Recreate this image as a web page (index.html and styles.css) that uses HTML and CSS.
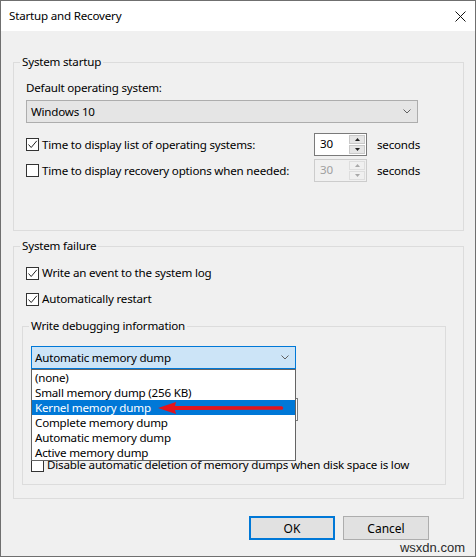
FILE: index.html
```html
<!DOCTYPE html>
<html>
<head>
<meta charset="utf-8">
<title>Startup and Recovery</title>
<link rel="stylesheet" href="styles.css">
</head>
<body>
<div class="window">
  <div class="titlebar">
    <span class="title">Startup and Recovery</span>
    <svg class="close" width="11" height="11" viewBox="0 0 11 11"><path d="M0.5 0.5 L10.5 10.5 M10.5 0.5 L0.5 10.5" stroke="#111" stroke-width="1" fill="none"/></svg>
  </div>
  <div class="content">
    <fieldset class="group startup">
      <legend>System startup</legend>
      <div class="label">Default operating system:</div>
      <div class="select os">
        <span>Windows 10</span>
        <svg class="chev" width="8" height="5" viewBox="0 0 8 5"><path d="M0.5 0.5 L4 4 L7.5 0.5" stroke="#606060" stroke-width="1" fill="none"/></svg>
      </div>
      <div class="row timed">
        <span class="check"><svg width="11" height="11" viewBox="0 0 11 11"><path d="M1.5 5.5 L4.2 8.5 L9.8 1.8" stroke="#222" stroke-width="1" fill="none"/></svg></span>
        <span class="row-text">Time to display list of operating systems:</span>
        <div class="spin">
          <span class="spin-value">30</span>
          <span class="spin-btns">
            <span class="spin-btn"><svg width="5" height="3" viewBox="0 0 5 3"><path d="M0 3 L2.5 0 L5 3 Z" fill="#222"/></svg></span>
            <span class="spin-btn"><svg width="5" height="3" viewBox="0 0 5 3"><path d="M0 0 L2.5 3 L5 0 Z" fill="#222"/></svg></span>
          </span>
        </div>
        <span class="unit">seconds</span>
      </div>
      <div class="row timed second">
        <span class="check"></span>
        <span class="row-text">Time to display recovery options when needed:</span>
        <div class="spin disabled">
          <span class="spin-value">30</span>
          <span class="spin-btns">
            <span class="spin-btn"><svg width="5" height="3" viewBox="0 0 5 3"><path d="M0 3 L2.5 0 L5 3 Z" fill="#a8a8a8"/></svg></span>
            <span class="spin-btn"><svg width="5" height="3" viewBox="0 0 5 3"><path d="M0 0 L2.5 3 L5 0 Z" fill="#a8a8a8"/></svg></span>
          </span>
        </div>
        <span class="unit">seconds</span>
      </div>
    </fieldset>

    <fieldset class="group failure">
      <legend>System failure</legend>
      <div class="row">
        <span class="check"><svg width="11" height="11" viewBox="0 0 11 11"><path d="M1.5 5.5 L4.2 8.5 L9.8 1.8" stroke="#222" stroke-width="1" fill="none"/></svg></span>
        <span class="row-text">Write an event to the system log</span>
      </div>
      <div class="row gap">
        <span class="check"><svg width="11" height="11" viewBox="0 0 11 11"><path d="M1.5 5.5 L4.2 8.5 L9.8 1.8" stroke="#222" stroke-width="1" fill="none"/></svg></span>
        <span class="row-text">Automatically restart</span>
      </div>

      <fieldset class="group debug">
        <legend>Write debugging information</legend>
        <div class="dropdown">
          <div class="select open">
            <span>Automatic memory dump</span>
            <svg class="chev" width="8" height="5" viewBox="0 0 8 5"><path d="M0.5 0.5 L4 4 L7.5 0.5" stroke="#606060" stroke-width="1" fill="none"/></svg>
          </div>
          <ul class="list">
            <li>(none)</li>
            <li>Small memory dump (256 KB)</li>
            <li class="selected">Kernel memory dump</li>
            <li>Complete memory dump</li>
            <li>Automatic memory dump</li>
            <li>Active memory dump</li>
            <svg class="arrow" width="130" height="14" viewBox="0 0 130 14"><path d="M0 7 L18 1 L17 5 L124 5.2 Q126.5 7 124 8.8 L17 9 L18 13 Z" fill="#e3141c"/></svg>
          </ul>
        </div>
        <div class="textbox"></div>
        <div class="row disable">
          <span class="check"></span>
          <span class="row-text">Disable automatic deletion of memory dumps when disk space is low</span>
        </div>
      </fieldset>
    </fieldset>

    <div class="buttons">
      <button class="btn default">OK</button>
      <button class="btn">Cancel</button>
    </div>
  </div>
  <div class="watermark">wsxdn.com</div>
</div>
</body>
</html>
```

FILE: styles.css
```css
* { box-sizing: border-box; }
html, body { margin: 0; padding: 0; }
body {
  width: 476px;
  height: 557px;
  overflow: hidden;
  font-family: "Noto Sans", "Liberation Sans", sans-serif;
  font-size: 11.6px;
  letter-spacing: -0.2px;
  color: #000;
  background: #f0f0f0;
}
.window {
  position: relative;
  width: 476px;
  height: 557px;
  border: 1px solid #6f6f6f;
  background: #f0f0f0;
}
.titlebar {
  height: 30px;
  background: #fff;
  display: flex;
  align-items: center;
  justify-content: space-between;
  padding: 0 9px 0 8px;
}
.title { line-height: 16px; }
.close { margin-top: 1px; }
.content { padding: 0 0 0 12px; }

.group {
  margin: 0;
  border: 1px solid #dcdcdc;
  padding: 0 0 0 12px;
  min-width: 0;
}
.group legend {
  padding: 0 2px;
  margin-left: -6px;
  line-height: 16px;
  height: 16px;
}
.startup {
  width: 451px;
  margin-top: 23px;
  padding-top: 10px;
  padding-bottom: 48px;
}
.label { line-height: 16px; height: 16px; }
.select {
  height: 23px;
  border: 1px solid #adadad;
  background: #e5e5e5;
  display: flex;
  align-items: center;
  justify-content: space-between;
  padding: 0 6px 0 4px;
  line-height: 16px;
}
.select.os { width: 392px; margin-top: 4px; }
.row {
  display: flex;
  align-items: center;
  height: 16px;
  line-height: 16px;
}
.check {
  width: 13px;
  height: 13px;
  border: 1px solid #333;
  background: #fff;
  margin-right: 3px;
  display: flex;
  align-items: center;
  justify-content: center;
  flex: none;
}
.timed { height: 23px; margin-top: 10px; }
.timed.second { margin-top: 3px; }
.timed .row-text { width: 272px; }
.spin {
  width: 53px;
  height: 23px;
  border: 1px solid #7a7a7a;
  background: #fff;
  display: flex;
  align-items: stretch;
}
.spin-value { flex: 1; padding-left: 5px; line-height: 20px; }
.spin-btns {
  width: 17px;
  display: flex;
  flex-direction: column;
  padding: 1px 1px 1px 0;
  gap: 1px;
}
.spin-btn {
  flex: 1;
  background: #e5e5e5;
  border: 1px solid #c9c9c9;
  display: flex;
  align-items: center;
  justify-content: center;
}
.spin.disabled { border-color: #cccccc; background: #f0f0f0; color: #a0a0a0; }
.spin.disabled .spin-btn { background: #f0f0f0; border-color: #dedede; }
.unit { margin-left: 10px; }

.failure {
  width: 451px;
  margin-top: 7px;
  padding-top: 11px;
  padding-bottom: 13px;
}
.gap { margin-top: 10px; }
.debug {
  width: 424px;
  margin: 11px 0 0 -4px;
  padding: 12px 0 11px 8px;
}
.debug legend { margin-left: -2px; }
.dropdown { position: relative; width: 265px; }
.select.open {
  border-color: #0078d7;
  background: #cce4f7;
  padding: 0 6px 0 3px;
}
.list {
  position: absolute;
  left: 0;
  top: 23px;
  width: 265px;
  margin: 0;
  padding: 0;
  list-style: none;
  background: #fff;
  border: 1px solid #646464;
  z-index: 2;
}
.list li {
  height: 15px;
  line-height: 15px;
  padding-left: 3px;
  white-space: nowrap;
}
.list li.selected { background: #0078d7; color: #fff; }
.arrow { position: absolute; left: 126px; top: 31px; }
.textbox {
  width: 267px;
  height: 23px;
  margin-top: 29px;
  border: 1px solid #7a7a7a;
  background: #fff;
}
.disable { margin-top: 36px; }

.buttons {
  width: 451px;
  display: flex;
  justify-content: flex-end;
  gap: 8px;
  padding-right: 35px;
  margin-top: 17px;
}
.btn {
  width: 86px;
  height: 24px;
  border: 1px solid #adadad;
  background: #e1e1e1;
  font-family: inherit;
  font-size: 12px;
  color: #000;
  padding: 0;
}
.btn.default { border: 2px solid #0078d7; }
.watermark {
  position: absolute;
  right: 10px;
  bottom: 0px;
  font-family: "Liberation Sans", sans-serif;
  font-size: 13px;
  letter-spacing: 0;
  color: #2a2a2a;
  line-height: 16px;
}
```
